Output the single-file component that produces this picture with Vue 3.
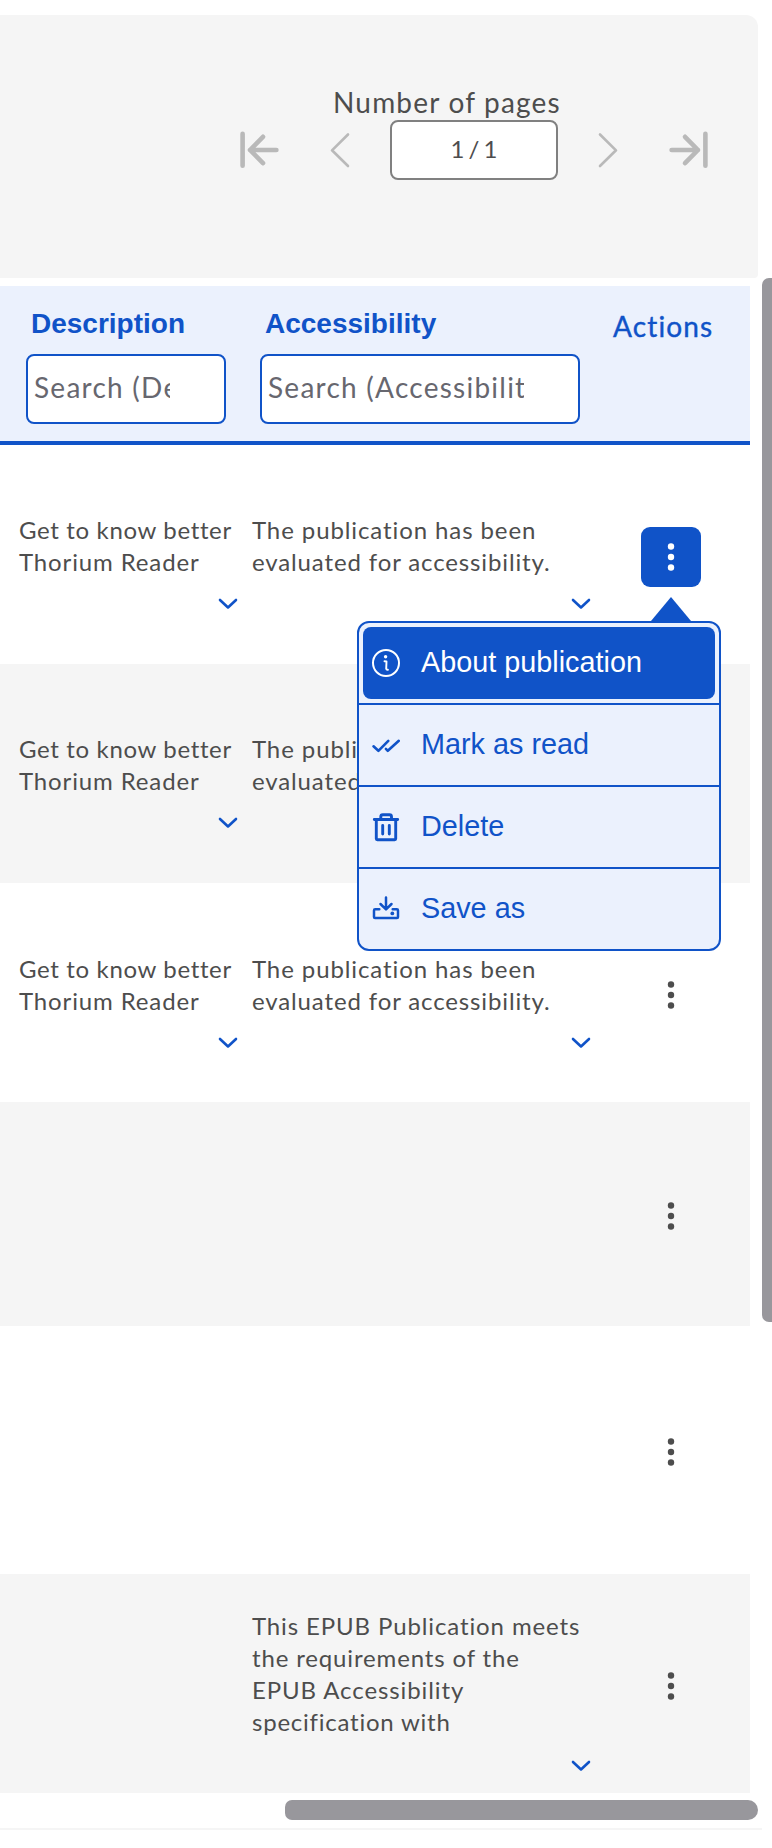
<script setup>
const blurb = [
  { t: 'The publication has been', s: 0.9 },
  { t: 'evaluated for accessibility.', s: 0.87 },
]
const about = [
  { t: 'Get to know better', s: 0.65 },
  { t: 'Thorium Reader', s: 0.87 },
]
const rows = [
  { h: 219, d: about, a: blurb, active: true },
  { h: 219, d: about, a: blurb },
  { h: 219, d: about, a: blurb, low: true },
  { h: 224, d: [], a: [] },
  { h: 248, d: [], a: [] },
  {
    h: 219,
    d: [],
    a: [
      { t: 'This EPUB Publication meets', s: 0.88 },
      { t: 'the requirements of the', s: 0.85 },
      { t: 'EPUB Accessibility', s: 0.9 },
      { t: 'specification with', s: 0.77 },
    ],
  },
]
const items = [
  { id: 'about', label: 'About publication' },
  { id: 'read', label: 'Mark as read' },
  { id: 'delete', label: 'Delete' },
  { id: 'save', label: 'Save as' },
]
</script>

<template>
  <div class="page">
    <section class="pager">
      <svg class="nav first" viewBox="0 0 40 40"><path d="M3.600 3.700v32M11 20h26.400M24 6.800L11 20l13 13.200" /></svg>
      <svg class="nav thin prev" viewBox="0 0 20 36"><path d="M18 2.500L2 18.300L18 34" /></svg>
      <div class="count">
        <label>Number of pages</label>
        <div class="box">1 / 1</div>
      </div>
      <svg class="nav thin next" viewBox="0 0 20 36"><path d="M2 2.500L18 18.300L2 34" /></svg>
      <svg class="nav last" viewBox="0 0 40 40"><path d="M36.400 3.700v32M2.600 20h26.400M16 6.800l13 13.200l-13 13.200" /></svg>
    </section>

    <div class="body">
      <div class="table">
        <div class="head">
          <div class="hcol desc">
            <b>Description</b>
            <div class="field"><span>Search (Description)</span></div>
          </div>
          <div class="hcol acc">
            <b>Accessibility</b>
            <div class="field"><span>Search (Accessibility)</span></div>
          </div>
          <div class="actions">Actions</div>
        </div>

        <div v-for="(r, i) in rows" :key="i" class="row" :class="{ odd: i % 2, low: r.low }" :style="{ height: r.h + 'px' }">
          <div class="cell c1">
            <template v-if="r.d.length">
              <p v-for="l in r.d" :key="l.t" :style="{ letterSpacing: l.s + 'px' }">{{ l.t }}</p>
              <svg class="chev" viewBox="0 0 20 12"><path d="M2 2l8 7.500l8-7.500" /></svg>
            </template>
          </div>
          <div class="cell c2" :class="{ long: r.a.length > 2 }">
            <template v-if="r.a.length">
              <p v-for="l in r.a" :key="l.t" :style="{ letterSpacing: l.s + 'px' }">{{ l.t }}</p>
              <svg class="chev" viewBox="0 0 20 12"><path d="M2 2l8 7.500l8-7.500" /></svg>
            </template>
          </div>
          <div class="cell c3">
            <div class="more" :class="{ active: r.active }">
              <svg viewBox="0 0 60 60">
                <circle cx="30" cy="19.500" r="3.200" /><circle cx="30" cy="30" r="3.200" /><circle cx="30" cy="40.500" r="3.200" />
              </svg>
              <div v-if="r.active" class="popover">
                <svg class="arrow" viewBox="0 0 40 24"><path d="M0 24L20 0L40 24z" /></svg>
                <div class="menu">
                  <div v-for="it in items" :key="it.id" class="item" :class="it.id">
                    <div class="inner">
                      <svg v-if="it.id === 'about'" class="ico" viewBox="0 0 30 30">
                        <circle cx="15" cy="15" r="13" stroke-width="2" />
                        <circle cx="14.600" cy="8.700" r="1.700" class="fill" />
                        <path d="M13.500 13.300l2 .1l-.3 7.200q.1 1.200 1.700 1.100" stroke-width="1.900" />
                      </svg>
                      <svg v-else-if="it.id === 'read'" class="ico" viewBox="0 0 30 30">
                        <path d="M2.500 16.300l4.900 4.500L17.300 10.800M14.900 18.900l1.900 1.900L27.800 10.800" stroke-width="2.600" />
                      </svg>
                      <svg v-else-if="it.id === 'delete'" class="ico" viewBox="0 0 30 30">
                        <path d="M3.300 7.500h23.400M9.800 7v-2.300q0-2 2-2h6.700q2 0 2 2v2.300M5.300 7.500v19.300q0 1 1 1h17.400q1 0 1-1V7.500M11.700 13.500v8.500M18.300 13.500v8.500" stroke-width="2.900" />
                      </svg>
                      <svg v-else class="ico" viewBox="0 0 30 30">
                        <path d="M15 3.500v11.400M9.500 10l5.500 5.400l5.500-5.400M8.300 15.200H4.200q-1.200 0-1.200 1.200v6.600q0 1 1 1h22q1 0 1-1v-6.600q0-1.200-1.200-1.200h-4.100" stroke-width="2.500" />
                        <circle cx="21.300" cy="19.400" r="1.900" class="fill" />
                      </svg>
                      <span>{{ it.label }}</span>
                    </div>
                  </div>
                </div>
              </div>
            </div>
          </div>
        </div>
        <div class="hbar"></div>
      </div>
      <div class="vbar"></div>
    </div>
    <div class="rule"></div>
  </div>
</template>

<style>
body { margin: 0; background: #fff; overflow: hidden; }
</style>

<style scoped>
* { box-sizing: border-box; }
.page { width: 772px; height: 1848px; overflow: hidden; padding-top: 15px; background: #fff; color: #4d4d4d; font-family: Lato, "Noto Sans", sans-serif; font-size: 24px; }
.pager { width: 758px; height: 263px; background: #f5f5f5; border-radius: 0 12px 4px 0; display: flex; align-items: flex-start; padding: 0 50px 0 239px; }
.nav { fill: none; stroke: #b9b9b9; stroke-width: 4.600; stroke-linecap: round; stroke-linejoin: round; flex: none; width: 40px; height: 40px; margin-top: 115px; }
.nav.thin { stroke-width: 2.600; width: 20px; height: 36px; margin-top: 117px; }
.prev { margin-left: 51px; }
.next { margin-left: 40px; }
.last { margin-left: 51px; }
.count { margin-left: 40px; width: 168px; margin-top: 70px; display: flex; flex-direction: column; align-items: flex-start; }
label { font-size: 28px; line-height: 34px; height: 35px; margin-left: -57px; white-space: nowrap; letter-spacing: 1.200px; }
.box { width: 168px; height: 60px; border: 2px solid #808080; border-radius: 8px; background: #fff; text-align: center; line-height: 53px; word-spacing: -2px; }
.body { display: flex; margin-top: 8px; height: 1542px; }
.table { width: 750px; flex: none; }
.vbar { width: 20px; height: 1044px; margin: -8px 0 0 12px; border-radius: 7px 10px 10px 7px; background: #98979c; flex: none; }
.head { display: flex; height: 159px; background: #ebf1fd; border-bottom: 4px solid #1053c8; color: #1053c8; padding-left: 26px; }
.hcol { padding-top: 21px; }
.hcol b { display: block; font: bold 28px/34px "Liberation Sans", sans-serif; padding-left: 5px; height: 47px; }
.desc { width: 234px; }
.acc { width: 352px; }
.field { height: 70px; border: 2px solid #1053c8; border-radius: 8px; background: #fff; color: #67676f; font-size: 28px; padding: 13px 0 0 6px; letter-spacing: 1.250px; }
.desc .field { width: 200px; }
.acc .field { width: 320px; }
.field span { display: block; overflow: hidden; white-space: nowrap; line-height: 36px; }
.desc .field span { width: 136px; }
.acc .field span { width: 256px; }
.actions { font-size: 28px; line-height: 34px; padding: 23px 0 0 1px; -webkit-text-stroke: 0.400px #1053c8; letter-spacing: 1.150px; }
.row { display: flex; background: #fff; }
.row.odd { background: #f5f5f5; }
.cell { flex: none; display: flex; flex-direction: column; padding-top: 69px; }
.low .cell { padding-top: 70px; }
.c1 { padding-left: 19px; width: 252px; }
.c2 { width: 379px; }
.c2.long { padding-top: 36px; }
.cell p { margin: 0; line-height: 32px; height: 32px; white-space: nowrap; }
.chev { width: 20px; height: 12px; margin: 20px 0 0 199px; fill: none; stroke: #1053c8; stroke-width: 2.600; stroke-linecap: round; stroke-linejoin: round; flex: none; }
.c2 .chev { margin-left: 319px; }
.c2.long .chev { margin-top: 22px; }
.row .c3 { padding: 0 0 0 10px; width: 119px; justify-content: center; }
.more { width: 60px; height: 60px; border-radius: 9px; position: relative; top: 2px; fill: #4d4d4d; }
.more > svg { display: block; width: 60px; height: 60px; }
.active { background: #1053c8; fill: #fff; }
.popover { position: absolute; z-index: 5; right: -20px; top: 70px; width: 364px; }
.arrow { display: block; width: 40px; height: 24px; margin-left: 294px; fill: #1053c8; }
.menu { border: 2px solid #1053c8; border-radius: 12px; background: #ebf1fd; color: #1053c8; overflow: hidden; height: 330px; }
.item { height: 82px; padding: 4px; border-bottom: 2px solid #1053c8; }
.item:last-child { border-bottom: 0; }
.inner { height: 72px; border-radius: 8px; display: flex; align-items: center; padding-left: 8px; gap: 20px; font: 28.800px "Liberation Sans", sans-serif; }
.about .inner { background: #1053c8; color: #fff; }
.ico { width: 30px; height: 30px; fill: none; stroke: currentColor; stroke-linecap: round; stroke-linejoin: round; }
.ico .fill { fill: currentColor; stroke: none; }
.hbar { width: 473px; height: 20px; margin: 7px 0 0 285px; border-radius: 7px 10px 10px 7px; background: #98979c; }
.rule { width: 762px; height: 2px; background: #f5f5f5; }
</style>
